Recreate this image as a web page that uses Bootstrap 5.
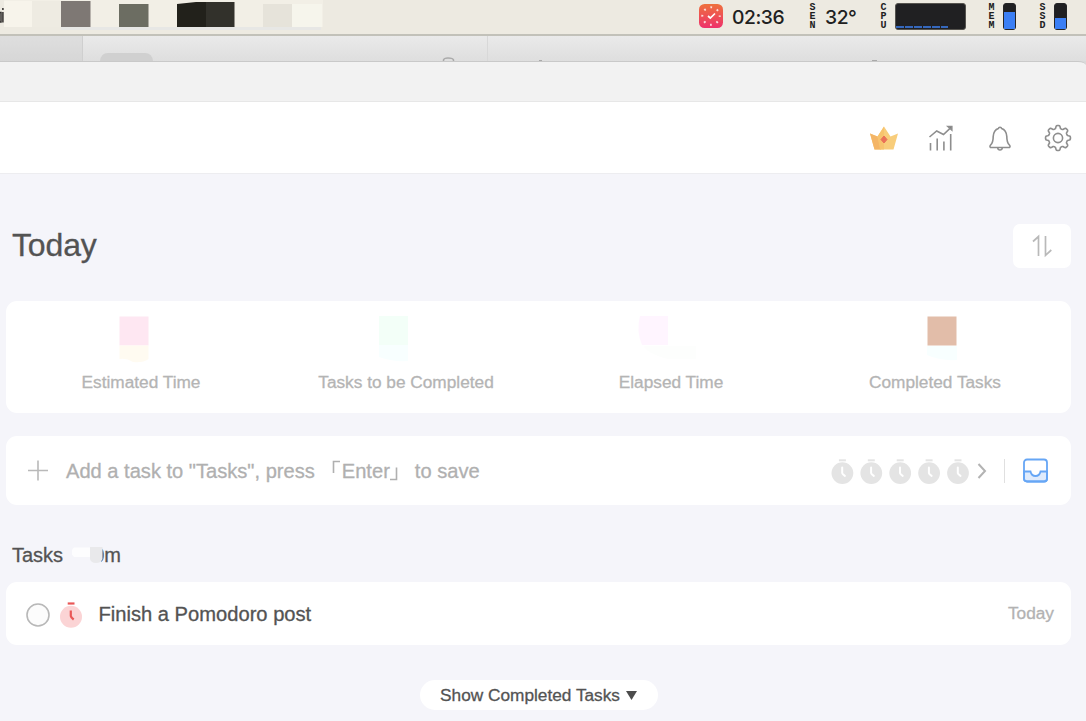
<!DOCTYPE html>
<html lang="en">
<head>
<meta charset="utf-8">
<meta name="viewport" content="width=device-width, initial-scale=1">
<title>Today</title>
<link href="https://cdn.jsdelivr.net/npm/bootstrap@5.3.0/dist/css/bootstrap.min.css" rel="stylesheet">
<style>
  body{font-family:"Liberation Sans",Arial,sans-serif;background:#f5f5fa;color:#535353;width:1086px;height:721px;overflow:hidden;font-size:17.25px;line-height:1.2;-webkit-text-stroke:.3px}
  svg{display:block;flex:none}
  .menubar{height:36px;background:#edeae1;border-bottom:2px solid #c2c1b9;color:#202020;-webkit-text-stroke:0}
  .menu-right{height:32px;padding-right:19px}
  .clock-text{font-family:Inter,sans-serif;font-weight:500;font-size:19.3px;letter-spacing:-.45px;line-height:32px;padding-top:1px}
  .tiny-label{font-family:"Liberation Mono",monospace;font-weight:700;font-size:10px;line-height:9px;text-align:center;width:9px}
  .meter{height:27px;border:1px solid #55534e;border-radius:3px;background:#202022}
  .meter-v{width:13px;border-color:#252527;border-width:1px}
  .meter-fill{background:#3b7ff5}
  .backwin{height:25px;background:linear-gradient(#eaeaea,#dedede)}
  .win-edge{background:#dadada}
  .titlebar{height:41px;background:#f2f2f2;border-top:1px solid #c9c9c9;border-bottom:1px solid #e7e7e7;border-top-right-radius:8px 4px}
  .appbar{height:72px;background:#fff;border-bottom:1px solid #ededf0;padding-right:14px}
  .main-area{padding:50px 15px 0 6px}
  .page-title{font-size:32px;line-height:42px;padding-left:6px;letter-spacing:-.15px;color:#535353}
  .sort-btn{width:58px;height:44px;border-radius:7px;background:#fff}
  .panel{background:#fff;border-radius:11px}
  .stats{height:112px;margin-top:33px;padding-right:6px}
  .stat-label{color:#b4b4b4;margin-top:71px;white-space:nowrap}
  .addrow{height:69px;margin-top:23px;padding:0 23px 0 21px;color:#b0b0b0;font-size:20.1px}
  .addrow span{padding-top:2px}
  .section-h{font-size:20px;height:77px;padding:39px 0 0 6px;line-height:22px}
  .taskrow{height:63px;padding:0 17px 0 20px}
  .task-name{font-size:20.15px;margin-left:17px;padding-top:2px}
  .muted{color:#b2b2b2}
  .show-btn{width:238px;height:30px;border-radius:15px;background:#fff;margin-top:35px}
</style>
</head>
<body>
<div class="menubar d-flex justify-content-between">
  <svg width="340" height="34" viewBox="0 0 340 34">
    <rect x="4" y="0" width="319" height="27" fill="#f2efe6"/>
    <rect x="4" y="1" width="28" height="26" fill="#f7f4eb"/>
    <rect x="32" y="1" width="29" height="26" fill="#eeebe2"/>
    <rect x="61" y="1" width="29.500" height="26" fill="#7e7874"/>
    <rect x="119" y="4" width="29.500" height="23" fill="#6c6d62"/>
    <path d="M177 4L196 2H206V27H177Z" fill="#22211b"/>
    <rect x="206" y="2" width="28.500" height="25" fill="#32312b"/>
    <rect x="263" y="4" width="29" height="23" fill="#e6e3da"/>
    <rect x="292" y="4" width="30" height="23" fill="#f6f5ec"/>
    <rect x="61" y="27" width="260" height="3" fill="#e7e7e5"/>
    <path d="M0 12.500H1V22H0M2.900 12V22.500M2.900 8V10" stroke="#33312f" stroke-width="1.500" fill="none"/>
  </svg>
  <div class="menu-right d-flex align-items-center">
    <svg width="24" height="24" viewBox="0 0 24 24"><defs><linearGradient id="rg" x1="0" y1="0" x2="0" y2="1"><stop stop-color="#ee713d"/><stop offset="1" stop-color="#ee316b"/></linearGradient></defs><rect width="24" height="24" rx="5.500" fill="url(#rg)"/><circle cx="12" cy="12" r="8.700" fill="none" stroke="#fff" stroke-opacity=".8" stroke-width="2" stroke-dasharray="1.800 5.033" stroke-dashoffset=".9"/><path d="M9 12L11.300 14L16 9.500" fill="none" stroke="#fff" stroke-width="1.700"/></svg>
    <span class="clock-text" style="margin-left:9px;width:76px">02:36</span>
    <span class="tiny-label">S<br>E<br>N</span>
    <span class="clock-text" style="margin-left:8px;width:54px">32°</span>
    <span class="tiny-label">C<br>P<br>U</span>
    <div class="meter d-flex align-items-end" style="margin-left:7px;width:71px"><svg width="52" height="3"><path d="M0 1H52" stroke="#3568bd" stroke-width="2" stroke-dasharray="8 1"/></svg></div>
    <span class="tiny-label" style="margin-left:21px">M<br>E<br>M</span>
    <div class="meter meter-v d-flex align-items-end" style="margin-left:7px"><div class="meter-fill w-100" style="height:68%"></div></div>
    <span class="tiny-label" style="margin-left:22px">S<br>S<br>D</span>
    <div class="meter meter-v d-flex align-items-end" style="margin-left:7px"><div class="meter-fill w-100" style="height:44%"></div></div>
  </div>
</div>
<div class="backwin">
  <svg width="1086" height="25" viewBox="0 0 1086 25"><rect width="82" height="25" fill="#c8c8c8" opacity=".35"/><path d="M82.500 0V25" stroke="#cfcfcf"/><path d="M487.500 0V25" stroke="#d8d8d8"/><path d="M100 25Q101 17 108 17H145Q152 17 153 25Z" fill="#d0d0d0"/><path d="M443.500 25V24Q444 22 448 22Q453 22 453.500 24V25" fill="none" stroke="#aaa" stroke-width="1.500"/><path d="M539 24.500H542M872 24.500H877" stroke="#aaa"/></svg>
</div>
<div class="win-edge"><div class="titlebar"></div></div>
<header class="appbar d-flex align-items-center justify-content-end">
  <svg width="30" height="28" viewBox="0 0 30 28"><path d="M1 9.500L8.500 12.500L15 2.500L21.500 12.500L29 9.500L24.500 25.500H5.500Z" fill="#f8cd7b"/><path d="M1 9.500L8.500 12.500L12 25.500H5.500Z" fill="#f4b566"/><path d="M8.500 12.500L15 2.500V25.500H11Z" fill="#f7c36e"/><path d="M15 12L18 15.500L15 19L12 15.500Z" fill="#ea7158" stroke="#ea7158" stroke-linejoin="round"/></svg>
  <svg style="margin-left:29px" width="28" height="28" viewBox="0 0 28 28" fill="none" stroke="#8e8e8e" stroke-width="1.600"><path d="M2.500 19V26.500M9.200 14.500V26.500M15.900 17.500V26.500M22.700 10V26.500M1.500 13L8.700 7L15.500 10.500L22 4.300"/><path d="M20 2.500H23.800V6Z" fill="#777"/></svg>
  <svg style="margin-left:30px" width="28" height="28" viewBox="0 0 28 28" fill="none" stroke="#8e8e8e" stroke-width="1.600" stroke-linejoin="round"><path d="M4.500 23.500Q3.300 22.500 4.800 20.800C7 18.500 7.200 16 7.200 12.500C7.500 8.500 9 5.500 12.400 4.500Q12.600 3.200 14 3.200Q15.400 3.200 15.600 4.500C19 5.500 20.500 8.500 20.800 12.500C20.800 16 21 18.500 23.200 20.800Q24.700 22.500 23.500 23.500ZM11.700 24Q12 26 14 26Q16 26 16.300 24"/></svg>
  <svg style="margin-left:30px" width="28" height="28" viewBox="-14 -14 28 28" fill="none" stroke="#8e8e8e" stroke-width="1.600" stroke-linejoin="round"><circle r="4.600"/><path id="gear"/></svg>
</header>
<main class="main-area">
  <div class="d-flex justify-content-between">
    <h1 class="page-title fw-normal mb-0">Today</h1>
    <div class="sort-btn d-flex align-items-center justify-content-center"><svg width="22" height="24" viewBox="0 0 22 24" fill="none" stroke="#b9b9b9" stroke-width="1.700"><path d="M2 7.500L7.500 2.500V22M14.500 2V21.300L20.300 16"/></svg></div>
  </div>
  <section class="panel stats position-relative">
    <svg class="position-absolute top-0 start-0" width="1064" height="72" viewBox="6 301 1064 72">
      <rect x="119.500" y="316.500" width="29" height="29" fill="#fee7f2"/><path d="M119.500 345.500H148.500V359Q143 363 133 362Q127 358 119.500 359Z" fill="#fffbf1"/>
      <rect x="379" y="316" width="29" height="29" fill="#f3fff8"/><path d="M379 345H408V361Q392 362 379 357Z" fill="#f8ffff"/>
      <path d="M640 316H668V345H642Q636 331 640 316Z" fill="#fff5ff"/><path d="M644 346H696V359H668Q650 355 644 346Z" fill="#fdfefd"/>
      <rect x="927.500" y="316.500" width="29" height="29" fill="#e2bda9"/><path d="M927 346H957V360Q940 361 927 355Z" fill="#f8ffff"/>
    </svg>
    <div class="d-flex text-center">
      <div class="stat-label" style="width:270px">Estimated Time</div>
      <div class="stat-label" style="width:260px">Tasks to be Completed</div>
      <div class="stat-label" style="width:270px">Elapsed Time</div>
      <div class="stat-label" style="width:258px">Completed Tasks</div>
    </div>
  </section>
  <section class="panel addrow d-flex align-items-center justify-content-between">
    <div class="d-flex align-items-center">
      <svg width="22" height="22" viewBox="0 0 22 22" stroke="#b9b9b9" stroke-width="1.600"><path d="M1 11.500H21M11 1.500V21.500"/></svg>
      <span style="margin-left:17px">Add a task to "Tasks", press</span>
      <svg width="8" height="24" style="margin-left:17px" viewBox="0 0 8 24" fill="none" stroke="#b0b0b0" stroke-width="1.600"><path d="M1.500 15V3.500H8"/></svg>
      <span style="margin-left:2px">Enter</span>
      <svg width="8" height="24" viewBox="0 0 8 24" fill="none" stroke="#b0b0b0" stroke-width="1.600"><path d="M6.500 9.500V21.500H0"/></svg>
      <span style="margin-left:17px">to save</span>
    </div>
    <div class="d-flex align-items-center">
      <svg width="146" height="28" viewBox="-.4 .4 146 28"><defs><g id="tm"><circle cx="11" cy="16.500" r="10.900" fill="#e4e4e4"/><path d="M7.500 3.700H14.500" stroke="#e4e4e4" stroke-width="2"/><path d="M10.800 11V16.500Q10.900 17.500 13.500 19.300" fill="none" stroke="#fff" stroke-width="2" stroke-linecap="round"/></g></defs><use href="#tm"/><use href="#tm" x="28.900"/><use href="#tm" x="57.800"/><use href="#tm" x="86.700"/><use href="#tm" x="115.600"/></svg>
      <svg width="10" height="18" viewBox="0 0 10 18" fill="none" stroke="#b3b3b3" stroke-width="2"><path d="M1.500 2L8 9L1.500 16"/></svg>
      <div style="width:1px;height:24px;background:#e0e0e0;margin:0 18px 0 17px"></div>
      <svg width="25" height="25" viewBox="0 0 25 25" fill="none" stroke="#66a6f5" stroke-width="1.800"><path d="M1 13.500H7.500Q8.500 18 12.500 18Q16.500 18 17.500 13.500H24V21Q24 23.500 21 23.500H4Q1 23.500 1 21Z" fill="#dfebfc"/><rect x="1" y="1.500" width="23" height="22" rx="3"/></svg>
    </div>
  </section>
  <div class="section-h d-flex align-items-start"><span>Tasks</span>
    <div class="position-relative" style="margin-left:9px"><span style="padding-left:21px">0m</span><svg class="position-absolute top-0 start-0" width="32" height="22" viewBox="0 0 32 22"><rect width="29" height="22" fill="#f5f5fa"/><path d="M2 3.500H18V13H2Q-3 8 2 3.500Z" fill="#fdfdfe"/><path d="M18 3H30.500V15Q29 19 24 19Q19 19 18 15Z" fill="#e9e9eb"/></svg></div>
  </div>
  <section class="panel taskrow d-flex align-items-center justify-content-between">
    <div class="d-flex align-items-center">
      <svg width="24" height="26" viewBox="0 0 24 26"><circle cx="12" cy="14" r="11" fill="#fcfcfc" stroke="#b8b8b8" stroke-width="1.600"/></svg>
      <svg width="22" height="28" style="margin-left:9.500px" viewBox="0 0 22 28"><circle cx="11" cy="16.800" r="11" fill="#fbd4d5"/><path d="M7.700 3.500H14.500" stroke="#e95756" stroke-width="2.200"/><path d="M10.800 10.500V16Q11 17.500 13.700 19.500" fill="none" stroke="#e95756" stroke-width="2.200"/></svg>
      <span class="task-name">Finish a Pomodoro post</span>
    </div>
    <span class="muted">Today</span>
  </section>
  <div class="d-flex justify-content-center"><div class="show-btn d-flex align-items-center justify-content-center">Show Completed Tasks<svg style="margin-left:6px" width="11" height="9" viewBox="0 0 11 9"><path d="M0 0H11L5.500 9Z" fill="#4c4c4c"/></svg></div></div>
</main>
<script src="https://cdn.jsdelivr.net/npm/bootstrap@5.3.0/dist/js/bootstrap.bundle.min.js"></script>
<script>
  // Eight-tooth gear outline for the settings icon
  const pts = [];
  for (let i = 0; i <= 180; i++) {
    const a = i * Math.PI / 90;
    const r = 11 + 1.5 * Math.tanh(2.2 * Math.cos(8 * a));
    pts.push((r * Math.sin(a)).toFixed(2) + ' ' + (-r * Math.cos(a)).toFixed(2));
  }
  document.getElementById('gear').setAttribute('d', 'M' + pts.join('L') + 'Z');
</script>
</body>
</html>
